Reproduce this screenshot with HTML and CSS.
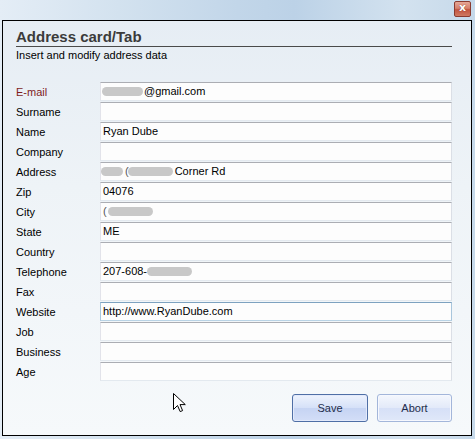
FILE: index.html
```html
<!DOCTYPE html>
<html>
<head>
<meta charset="utf-8">
<link rel="stylesheet" href="styles.css">
</head>
<body>
<div class="screen">
  <div class="titlebar">
    <div class="close">x</div>
  </div>
  <div class="frame">
    <div class="title">Address card/Tab</div>
    <div class="subtitle">Insert and modify address data</div>
    <div class="form">
      <div class="label label-req">E-mail</div>
      <div class="field"><span class="blob blob-mail"></span>@gmail.com</div>
      <div class="label">Surname</div>
      <div class="field"></div>
      <div class="label">Name</div>
      <div class="field">Ryan Dube</div>
      <div class="label">Company</div>
      <div class="field"></div>
      <div class="label">Address</div>
      <div class="field"><span class="blob blob-addr1"></span><span class="paren">(</span><span class="blob blob-addr2"></span>Corner Rd</div>
      <div class="label">Zip</div>
      <div class="field">04076</div>
      <div class="label">City</div>
      <div class="field"><span class="paren">(</span><span class="blob blob-city"></span></div>
      <div class="label">State</div>
      <div class="field">ME</div>
      <div class="label">Country</div>
      <div class="field"></div>
      <div class="label">Telephone</div>
      <div class="field">207-608-<span class="blob blob-tel"></span></div>
      <div class="label">Fax</div>
      <div class="field"></div>
      <div class="label">Website</div>
      <div class="field field-focus">http://www.RyanDube.com</div>
      <div class="label">Job</div>
      <div class="field"></div>
      <div class="label">Business</div>
      <div class="field"></div>
      <div class="label">Age</div>
      <div class="field"></div>
    </div>
    <div class="buttons">
      <div class="btn btn-default">Save</div>
      <div class="btn">Abort</div>
    </div>
  </div>
  <svg class="cursor" width="13" height="20" viewBox="0 0 13 20">
    <path d="M0.5 0.5 L0.5 16.5 L4.5 12.5 L7.2 18.6 L9.6 17.6 L7 11.6 L12.3 11.6 Z" fill="#fff" stroke="#000" stroke-width="1" stroke-linejoin="miter"/>
  </svg>
</div>
</body>
</html>
```

FILE: styles.css
```css
html, body {
  margin: 0;
  padding: 0;
}
body {
  width: 475px;
  height: 439px;
  overflow: hidden;
  font-family: "Liberation Sans", Arial, sans-serif;
  font-size: 11px;
  color: #000;
}
.screen {
  position: relative;
  width: 475px;
  height: 439px;
  background: linear-gradient(90deg, #e4edf6 0%, #d3e2ef 25%, #c2d6e9 50%, #bcd2e7 62%, #d3e2ef 85%, #c6d9ea 100%);
}
.titlebar {
  height: 20px;
  display: flex;
  justify-content: flex-end;
  align-items: flex-start;
  padding: 1px 4px 0 0;
  box-sizing: border-box;
}
.close {
  width: 17px;
  height: 16px;
  box-sizing: border-box;
  border: 1px solid #8a3b30;
  border-radius: 2px;
  background: linear-gradient(#e6a796 0%, #d5806c 45%, #c2543f 55%, #cf7a62 100%);
  color: #fff;
  font-size: 11px;
  line-height: 12px;
  text-align: center;
  font-family: "DejaVu Sans", sans-serif;
  font-weight: bold;
  text-shadow: 0 0 1px #6b2016;
}
.frame {
  margin: 0 3px 0 2px;
  height: 416px;
  box-sizing: border-box;
  border: 1px solid #000;
  background: linear-gradient(#e6edf4 0%, #eef3f7 40%, #f6f9fb 100%);
  display: flex;
  flex-direction: column;
}
.title {
  margin: 0 19px 0 13px;
  padding-top: 8px;
  padding-bottom: 1px;
  line-height: 16px;
  font-size: 15px;
  font-weight: bold;
  color: #3b3b3b;
  border-bottom: 1px solid #4a4a4a;
}
.subtitle {
  margin: 2px 0 0 13px;
  line-height: 13px;
}
.form {
  margin: 20px 19px 0 13px;
  display: grid;
  grid-template-columns: 84px 352px;
  grid-auto-rows: 19px;
  row-gap: 1px;
}
.label {
  line-height: 19px;
  padding-top: 1px;
  box-sizing: border-box;
}
.label-req {
  color: #7f1d1d;
}
.field {
  box-sizing: border-box;
  height: 19px;
  background: #fdfdfd;
  border-style: solid;
  border-width: 1px;
  border-color: #abadb3 #dbdfe6 #e3e9ef #e2e3ea;
  padding: 0 0 0 2px;
  line-height: 17px;
  white-space: nowrap;
  display: flex;
  align-items: center;
}
.field-focus {
  border-color: #7da2c0 #a9c6dc #b9d3e5 #a9c6dc;
}
.blob {
  display: inline-block;
  height: 9px;
  border-radius: 5px;
  background: #c8c8c8;
  filter: blur(0.6px);
}
.blob-mail { width: 41px; margin-left: -1px; margin-right: 1px; }
.blob-addr1 { width: 22px; margin-left: -2px; margin-right: 2px; }
.blob-addr2 { width: 45px; margin-left: -1px; margin-right: 2px; }
.blob-city { width: 45px; margin-left: 1px; }
.blob-tel { width: 45px; }
.paren {
  color: #555;
}
.buttons {
  margin: 13px 19px 0 0;
  display: flex;
  justify-content: flex-end;
  gap: 9px;
}
.btn {
  width: 75px;
  height: 28px;
  box-sizing: border-box;
  border: 1px solid #a3b6da;
  border-radius: 3px;
  background: linear-gradient(#f4f7fd 0%, #e3eaf9 48%, #d6e0f7 52%, #e0e8f9 100%);
  box-shadow: inset 0 0 0 1px #f6f8fe;
  color: #1f2d4b;
  text-align: center;
  line-height: 26px;
}
.btn-default {
  width: 76px;
  border-color: #4f6fa6;
  background: linear-gradient(#eef3fd 0%, #d6e1f8 48%, #c6d4f3 52%, #d3def7 100%);
  box-shadow: inset 0 0 0 1px #e3eafb;
}
.cursor {
  position: absolute;
  left: 173px;
  top: 393px;
}
```
